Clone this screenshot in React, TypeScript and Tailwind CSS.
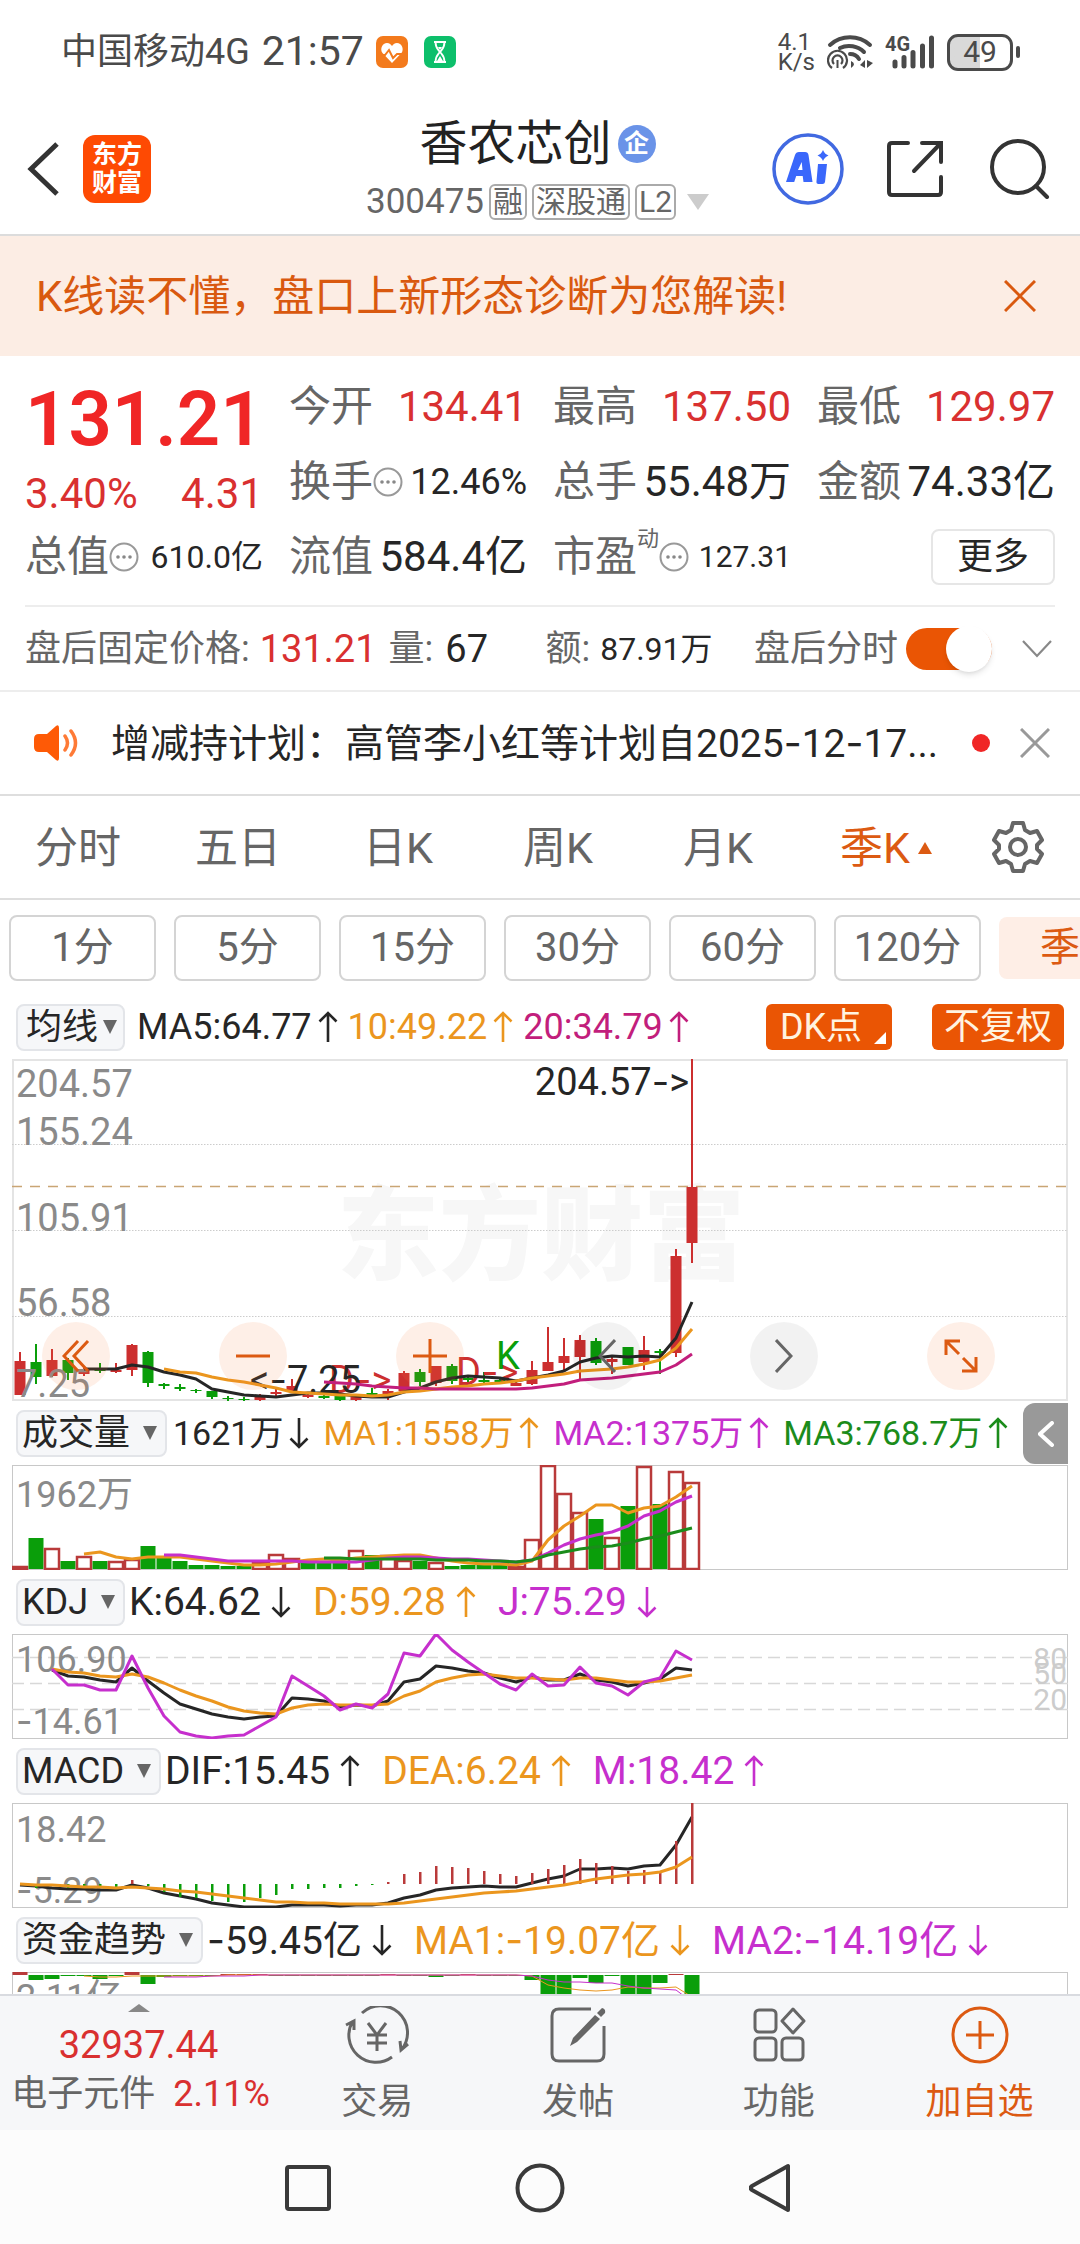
import React from "react";

const RED = "#cc2f2f";
const GREEN = "#0a9e0a";
const BLACK = "#262626";
const ORANGE = "#eb961e";
const PURPLE = "#c62fcd";
const MAGENTA = "#c21e7c";
const DARK_GREEN = "#1b8c1b";

type Candle = [up: number, high: number, top: number, bottom: number, low: number];

const candles: Candle[] = [
  [1, 293, 302, 336, 336], [0, 285, 303, 318, 325], [1, 290, 301, 317, 318], [0, 299, 301, 314, 321],
  [1, 309, 311, 315, 317], [0, 304, 310, 312, 314], [1, 304, 311, 313, 314], [1, 285, 286, 311, 317],
  [0, 292, 293, 324, 328], [0, 324, 325, 327, 330], [0, 325, 328, 330, 332], [0, 330, 331, 332, 334],
  [0, 332, 332, 338, 340], [0, 337, 339, 340, 342], [0, 338, 340, 341, 343], [1, 335, 336, 341, 342],
  [1, 329, 333, 335, 339], [1, 320, 327, 333, 334], [1, 334, 336, 338, 339], [0, 334, 337, 339, 340],
  [0, 336, 337, 341, 343], [1, 337, 338, 341, 342], [0, 329, 334, 336, 339], [1, 330, 332, 335, 341],
  [1, 312, 314, 332, 333], [0, 310, 313, 323, 327], [1, 307, 307, 324, 327], [0, 305, 307, 322, 325],
  [0, 317, 319, 321, 324], [0, 313, 321, 323, 324], [0, 319, 321, 323, 325], [1, 323, 324, 327, 327],
  [1, 302, 311, 325, 326], [1, 268, 303, 312, 312], [1, 279, 297, 304, 312], [1, 276, 281, 298, 321],
  [0, 279, 282, 304, 306], [1, 298, 300, 303, 315], [0, 288, 288, 306, 306], [1, 277, 291, 303, 311],
  [0, 290, 292, 294, 315], [1, 190, 197, 294, 298], [1, 0, 128, 184, 204],
];
const ma5 = [310, 310, 310, 306, 308, 313, 316, 320, 330, 333, 336, 337, 338, 336, 334, 334, 335, 337, 338, 338, 333, 329, 323, 319, 317, 318, 319, 322, 319, 316, 312, 303, 299, 297, 298, 297, 298, 279, 243];
const ma10 = [310, 313, 314, 318, 321, 323, 326, 329, 333, 334, 335, 336, 336, 337, 336, 333, 332, 330, 328, 327, 325, 324, 322, 319, 317, 315, 312, 311, 310, 308, 305, 301, 289, 270];
const ma20 = [323, 324, 325, 327, 328, 329, 329, 330, 330, 330, 330, 330, 330, 329, 327, 325, 321, 320, 319, 317, 315, 313, 306, 295];

const volumes: [number, number][] = [
  [1, 101], [0, 73], [1, 83], [0, 96], [1, 91], [0, 96], [1, 96], [1, 94], [0, 81], [0, 92], [0, 96],
  [0, 100], [0, 100], [0, 101], [0, 101], [1, 97], [1, 89], [1, 93], [0, 97], [0, 97], [0, 98], [1, 85],
  [0, 90], [1, 90], [1, 95], [0, 96], [1, 97], [0, 101], [0, 100], [0, 100], [0, 100], [1, 101], [1, 74],
  [1, 0], [1, 28], [1, 47], [0, 54], [1, 72], [0, 41], [1, 1], [0, 39], [1, 6], [1, 17],
];
const vma1 = [89, 87, 92, 94, 92, 92, 92, 94, 96, 98, 100, 100, 99, 97, 95, 94, 95, 93, 92, 91, 90, 90, 93, 96, 98, 99, 99, 100, 96, 75, 61, 51, 40, 40, 48, 43, 41, 32, 21];
const vma2 = [90, 90, 92, 94, 96, 96, 96, 96, 96, 97, 97, 97, 97, 95, 93, 92, 92, 93, 94, 94, 95, 96, 97, 95, 88, 80, 74, 70, 67, 61, 51, 46, 37, 31];
const vma3 = [93, 93, 94, 94, 94, 94, 94, 95, 95, 95, 96, 96, 97, 95, 90, 87, 84, 82, 81, 78, 74, 71, 67, 63];

const kdjJ = [35, 51, 51, 56, 56, 22, 54, 82, 98, 102, 104, 102, 101, 92, 83, 42, 52, 62, 76, 70, 74, 60, 19, 22, 0, 16, 28, 39, 50, 56, 40, 52, 51, 33, 49, 52, 61, 48, 44, 17, 26];
const kdjK = [36, 42, 43, 46, 48, 34, 47, 59, 70, 75, 80, 83, 85, 83, 82, 64, 65, 67, 73, 71, 72, 67, 48, 45, 32, 34, 37, 39, 44, 48, 43, 46, 46, 40, 46, 48, 52, 49, 45, 34, 36];
const kdjD = [35, 38, 39, 42, 43, 40, 43, 49, 56, 62, 67, 73, 77, 79, 80, 74, 71, 70, 71, 71, 71, 70, 62, 57, 48, 44, 41, 40, 42, 44, 44, 45, 46, 44, 44, 46, 48, 48, 47, 44, 41];

const macdBars = [81, 85, 83, 85, 83, 84, 85, 77, 83, 89, 94, 95, 98, 99, 99, 95, 92, 86, 86, 85, 85, 83, 82, 79, 71, 69, 63, 64, 65, 68, 71, 73, 70, 66, 62, 56, 60, 63, 68, 67, 68, 38, 0];
const dif = [82, 83, 85, 86, 86, 87, 87, 82, 85, 90, 93, 96, 100, 102, 104, 104, 104, 102, 102, 102, 103, 102, 102, 100, 95, 92, 87, 85, 84, 83, 84, 84, 80, 76, 73, 66, 66, 65, 66, 63, 62, 42, 14];
const dea = [81, 82, 82, 83, 84, 84, 85, 84, 85, 86, 88, 89, 91, 93, 95, 97, 99, 99, 100, 100, 101, 101, 101, 101, 100, 98, 96, 94, 92, 90, 89, 88, 86, 84, 82, 79, 76, 74, 72, 71, 69, 64, 54];

const funds = [-3, 5, 4, 1, 0, 4, 0, -3, 9, 2, 1, 1, 0, -1, -1, -1, 0, 0, 1, 0, 0, 1, 0, -1, 0, 0, 2, 0, -1, 0, 0, 0, 5, 20, 20, 3, 8, 1, 20, 20, 8, -1, 20];
const fma1 = [4, 5, 5, 4, 4, 4, 4, 4, 4, 3, 3, 3, 3, 3, 3, 3, 3, 3, 3, 3, 3, 3, 3, 3, 3, 3, 3, 3, 4, 13, 16, 18, 19, 18, 15, 16, 16, 15, 25];
const fma2 = [5, 5, 5, 4, 4, 4, 3, 3, 3, 3, 3, 3, 3, 3, 3, 3, 3, 3, 3, 3, 3, 3, 3, 4, 8, 10, 10, 11, 11, 14, 16, 17, 18, 30];

const cx = (i: number) => 8 + i * 16;

function Line({ data, start, color, width = 3 }: { data: number[]; start: number; color: string; width?: number }) {
  return (
    <polyline
      points={data.map((v, k) => `${cx(k + start)},${v}`).join(" ")}
      fill="none"
      stroke={color}
      strokeWidth={width}
      strokeLinejoin="round"
    />
  );
}

/* Hyphens use Inter, whose dash is as wide as a figure. */
function Dashed({ text }: { text: string }) {
  return (
    <span>
      {text.split(/(-)/).map((part, i) => (part === "-" ? <span key={i} className="font-['Inter']">-</span> : part))}
    </span>
  );
}

function Dash() {
  return <tspan className="font-['Inter']">-</tspan>;
}

function Arrow({ down }: { down?: boolean }) {
  return (
    <svg viewBox="0 0 20 32" className="h-8 w-5 shrink-0" fill="none" stroke="currentColor" strokeWidth="2.6" aria-hidden="true">
      <path d={down ? "M10 1V30M1.5 21.5 10 30l8.5-8.5" : "M10 31V2M1.5 10.500 10 2l8.500 8.500"} />
    </svg>
  );
}

function Picker({ name, label, tight }: { name: string; label: string; tight?: boolean }) {
  return (
    <span className="relative inline-flex shrink-0">
      <select
        aria-label={label}
        className={`h-[47px] appearance-none rounded-lg border-2 border-[#e3e5e9] bg-[#f6f7f9] text-[36px] leading-none text-[#262626] ${tight ? "pr-6 pl-2" : "pr-[34px] pl-1"}`}
      >
        <option>{name}</option>
      </select>
      <svg viewBox="0 0 14 14" className={`pointer-events-none absolute top-4 h-3.5 w-3.5 ${tight ? "right-2" : "right-2.5"}`} aria-hidden="true">
        <path d="M0 0h14L7 14z" fill="#666" />
      </svg>
    </span>
  );
}

type Item = { text: string; down?: boolean; color: string };

function Indicator({ name, items, small, children }: { name: string; items: Item[]; small?: boolean; children?: React.ReactNode }) {
  return (
    <div className="relative flex h-16 items-center pl-4 whitespace-nowrap">
      <Picker name={name} label="指标" />
      <div className={small ? "flex gap-3.5 pl-1.5 text-[34px]" : "flex gap-[22px] pl-1 text-[39px]"}>
        {items.map((it) => (
          <span key={it.text} className={`flex items-center leading-none ${small ? "gap-1.5" : "gap-2.5"} ${it.color}`}>
            <Dashed text={it.text} />
            <Arrow down={it.down} />
          </span>
        ))}
      </div>
      {children}
    </div>
  );
}

function More() {
  return (
    <svg viewBox="0 0 30 30" className="h-[30px] w-[30px] shrink-0" aria-hidden="true">
      <circle cx="15" cy="15" r="13.500" fill="none" stroke="#999" strokeWidth="2" />
      <g fill="#888"><circle cx="9" cy="15" r="1.800" /><circle cx="15" cy="15" r="1.800" /><circle cx="21" cy="15" r="1.800" /></g>
    </svg>
  );
}

function Cell({ label, value, size, more, sup }: { label: string; value: string; size: string; more?: boolean; sup?: string }) {
  return (
    <div className="flex items-center justify-between whitespace-nowrap">
      <span className="flex items-center text-[#666]">
        {label}
        {sup && <sup className="top-[-18px] text-[22px] leading-none">{sup}</sup>}
        {more && <More />}
      </span>
      <span className={size}>{value}</span>
    </div>
  );
}

function StatusBar() {
  return (
    <div className="flex h-[104px] items-center justify-between pr-[60px] pl-[61px] text-[#4a4a4a]">
      <div className="flex items-center">
        <span className="text-[36px]">中国移动4G</span>
        <span className="ml-3 text-[41px]">21:57</span>
        <svg viewBox="0 0 32 32" className="ml-3 h-8 w-8" aria-hidden="true">
          <rect width="32" height="32" rx="7" fill="#f37a1c" />
          <path d="M16 27 6.500 17c-3-4 0-10 4.500-10 2.500 0 4 1.500 5 3 1-1.500 2.500-3 5-3 4.500 0 7.500 6 4.500 10z" fill="#fff" />
          <path d="M0 19h9l4-5 4 8 4-4h11" fill="none" stroke="#f37a1c" strokeWidth="2" />
        </svg>
        <svg viewBox="0 0 32 32" className="ml-4 h-8 w-8" aria-hidden="true">
          <rect width="32" height="32" rx="7" fill="#0dbf6b" />
          <path d="M10 6h12M10 26h12M11.500 6c0 6 2 7 4.500 10 2.500-3 4.500-4 4.500-10M11.500 26c0-6 2-7 4.500-10 2.500 3 4.500 4 4.500 10" fill="none" stroke="#fff" strokeWidth="1.800" />
          <path d="m13 25 3-5 3 5zM14 11h4l-2 3z" fill="#fff" />
        </svg>
      </div>
      <div className="flex items-center">
        <div className="flex flex-col text-[24px] leading-[20px]"><span>4.1</span><span>K/s</span></div>
        <svg viewBox="0 0 46 36" className="ml-3 h-9 w-[46px]" fill="none" stroke="#4a4a4a" aria-hidden="true">
          <g strokeWidth="4" strokeLinecap="round">
            <path d="M3 11a30 30 0 0 1 40 0" />
            <path d="M13 14c8-4 18-2 24 4" />
            <path d="M23 20q6 0 9 5" />
          </g>
          <g strokeWidth="2.200">
            <path d="M5 34a9.500 9.500 0 1 1 11 0" />
            <path d="M7 30a5 5 0 1 1 7 0" />
          </g>
          <path d="M9.500 34v-8h2v8zM24 27q6 3 0 7zM38 26v8l-5-3zM40 26l6 3-6 5z" fill="#4a4a4a" stroke="none" />
        </svg>
        <svg viewBox="0 0 50 36" className="ml-3 h-9 w-[50px]" aria-hidden="true">
          <text x="0" y="17" fontSize="20" fontWeight="700" fill="#4a4a4a">4G</text>
          <path d="M10 28v4M19 23.500v8.500M28 18.500v13.500M37.500 12v20M46.500 4v28" stroke="#4a4a4a" strokeWidth="5" strokeLinecap="round" />
        </svg>
        <div className="ml-3 flex h-[37px] w-[66px] items-center justify-center rounded-[11px] border-[3px] border-[#4a4a4a] bg-linear-to-r from-[#d9d9d9] from-50% to-white to-50% text-[30px] leading-none">49</div>
        <div className="ml-[3px] h-3 w-1 rounded-sm bg-[#4a4a4a]" />
      </div>
    </div>
  );
}

function Header() {
  return (
    <header className="grid h-[132px] grid-cols-[1fr_auto_1fr] items-center border-b-2 border-[#dcdcdc] pr-[30px] pl-[25px]">
      <div className="flex items-center gap-6">
        <button aria-label="返回">
          <svg viewBox="0 0 34 54" className="h-[54px] w-[34px]" fill="none" stroke="#333" strokeWidth="5"><path d="M32 2 6 27l26 25" /></svg>
        </button>
        <div className="flex h-[68px] w-[68px] flex-col items-center justify-center rounded-xl bg-[#fe4a03] text-[25px] leading-[28px] font-bold text-white"><span>东方</span><span>财富</span></div>
      </div>
      <div className="flex flex-col items-center gap-2.5">
        <h1 className="flex items-center gap-1.5 text-[48px] leading-[56px] text-[#222]">
          香农芯创
          <span className="flex h-[38px] w-[38px] items-center justify-center rounded-full bg-[#6a93e8] text-[25px] font-bold text-white">企</span>
        </h1>
        <div className="flex items-center gap-[5px] text-[35px] leading-10 text-[#666]">
          <span>300475</span>
          {["融", "深股通", "L2"].map((t) => (
            <span key={t} className="flex h-9 items-center rounded-md border-2 border-[#aaa] px-0.5 text-[30px]">{t}</span>
          ))}
          <svg viewBox="0 0 22 16" className="ml-1.5 h-4 w-[22px]" aria-hidden="true"><path d="M0 0h22L11 16z" fill="#ccc" /></svg>
        </div>
      </div>
      <div className="flex items-center justify-end">
        <button aria-label="Ai">
          <svg viewBox="0 0 72 72" className="h-[72px] w-[72px]">
            <circle cx="36" cy="36" r="34" fill="none" stroke="#4169e1" strokeWidth="3.500" />
            <path d="M14 49 23 22q1-3 4-3h6q3 0 3.500 3l4 27h-9l-.8-6h-6.500l-2 6zM26 37h4.500l-.8-8zM46 31h9l-2 18q-.3 2-2.500 2h-4q-2.500 0-2-3zM51 17q1.500 4 5.500 5.500-4 1.500-5.500 5.500-1.500-4-5.500-5.500 4-1.500 5.500-5.500z" fill="#3a67fb" fillRule="evenodd" />
          </svg>
        </button>
        <button aria-label="分享" className="ml-[42px]">
          <svg viewBox="0 0 58 58" className="h-[58px] w-[58px]" fill="none" stroke="#333" strokeWidth="4" strokeLinecap="round">
            <path d="M22 3H6Q3 3 3 6v46q0 3 3 3h46q3 0 3-3V37M55 22V3H36M55 3 28 31" />
          </svg>
        </button>
        <button aria-label="搜索" className="ml-[46px]">
          <svg viewBox="0 0 60 60" className="h-[60px] w-[60px]" fill="none" stroke="#333" strokeWidth="4" strokeLinecap="round">
            <circle cx="28" cy="28" r="26" /><path d="m46 47 11 11" />
          </svg>
        </button>
      </div>
    </header>
  );
}

function Quote() {
  return (
    <section className="px-[25px] pt-[13px] text-[42px] leading-none">
      <div className="grid grid-cols-4 grid-rows-[75px_75px_75px] gap-x-[26px] pb-[11px] text-[#262626]">
        <div className="row-span-2 flex flex-col justify-between pt-3">
          <div className="text-center text-[76px] leading-[76px] font-semibold text-[#f02626]">131.21</div>
          <div className="flex h-[50px] items-center justify-between text-[#d93030]"><span>3.40%</span><span>4.31</span></div>
        </div>
        <Cell label="今开" value="134.41" size="text-[42px] text-[#d93030]" />
        <Cell label="最高" value="137.50" size="text-[42px] text-[#d93030]" />
        <Cell label="最低" value="129.97" size="text-[42px] text-[#d93030]" />
        <Cell label="换手" value="12.46%" size="text-[36px]" more />
        <Cell label="总手" value="55.48万" size="text-[42px]" />
        <Cell label="金额" value="74.33亿" size="text-[42px]" />
        <Cell label="总值" value="610.0亿" size="text-[32px]" more />
        <Cell label="流值" value="584.4亿" size="text-[42px]" />
        <Cell label="市盈" value="127.31" size="text-[30px]" more sup="动" />
        <div className="flex items-center justify-end">
          <button className="h-14 w-[124px] rounded-lg border-2 border-[#e6e6e6] text-[36px]">更多</button>
        </div>
      </div>
      <div className="flex h-[85px] items-center border-t-2 border-[#ededed] text-[36px] whitespace-nowrap text-[#666]">
        <span>盘后固定价格:</span>
        <span className="ml-2.5 text-[38px] text-[#d93030]">131.21</span>
        <span className="ml-3">量:</span>
        <span className="ml-3 text-[38px] text-[#262626]">67</span>
        <span className="ml-auto pl-4">额:</span>
        <span className="ml-2.5 text-[32px] text-[#262626]">87.91万</span>
        <label htmlFor="after-hours" className="ml-auto">盘后分时</label>
        <span className="relative ml-2 h-[42px] w-[86px]">
          <input id="after-hours" type="checkbox" defaultChecked className="h-full w-full appearance-none rounded-full bg-[#ddd] checked:bg-[#ea5504]" />
          <span className="pointer-events-none absolute -top-0.5 right-0 h-[46px] w-[46px] rounded-full bg-white shadow-md" />
        </span>
        <button aria-label="展开" className="mr-[3px] ml-[30px]">
          <svg viewBox="0 0 30 18" className="h-[18px] w-[30px]" fill="none" stroke="#888" strokeWidth="2.200"><path d="m1 1 14 15L29 1" /></svg>
        </button>
      </div>
    </section>
  );
}

function Notice() {
  return (
    <section className="flex h-[106px] items-center border-y-2 border-[#dedede] border-t-[#ededed] pr-[30px] pl-[34px]">
      <svg viewBox="0 0 44 36" className="h-9 w-11 shrink-0" aria-hidden="true">
        <path d="M5 9h8L22 1q3-2 3 2v30q0 4-3 2l-9-8H5q-5 0-5-5v-8q0-5 5-5z" fill="#fe5a06" />
        <path d="M31 11q5 7 0 14M37 6q9 12 0 24" fill="none" stroke="#fe7a36" strokeWidth="3.500" strokeLinecap="round" />
      </svg>
      <p className="ml-[33px] min-w-0 flex-1 text-[39px] leading-[56px] whitespace-nowrap text-[#262626]">
        <Dashed text="增减持计划：高管李小红等计划自2025-12-17..." />
      </p>
      <span className="ml-4 h-[18px] w-[18px] rounded-full bg-[#f02626]" />
      <button aria-label="关闭" className="ml-[30px]">
        <svg viewBox="0 0 30 30" className="h-[30px] w-[30px]" stroke="#999" strokeWidth="3"><path d="m1 1 28 28M29 1 1 29" /></svg>
      </button>
    </section>
  );
}

function Tabs() {
  return (
    <nav className="grid h-[104px] grid-cols-[repeat(6,4fr)_3fr] border-b-2 border-[#dedede] text-[43px] text-[#666]">
      {["分时", "五日", "日K", "周K", "月K"].map((t) => (
        <button key={t} className="pt-0.5 pr-1">{t}</button>
      ))}
      <button className="flex items-center justify-center gap-2 pt-0.5 pl-3 text-[#dc5a12]">
        季K
        <svg viewBox="0 0 14 12" className="h-3 w-3.5" aria-hidden="true"><path d="M7 0l7 12H0z" fill="#dc5a12" /></svg>
      </button>
      <button aria-label="设置" className="flex items-center justify-center pr-1">
        <svg viewBox="0 0 52 52" className="h-[52px] w-[52px]" fill="none" stroke="#666" strokeWidth="4" strokeLinejoin="round">
          <path d="M21 2h10l2 7 5 3 7-2 5 9-5 5v4l5 5-5 9-7-2-5 3-2 7H21l-2-7-5-3-7 2-5-9 5-5v-4l-5-5 5-9 7 2 5-3z" />
          <circle cx="26" cy="26" r="8" />
        </svg>
      </button>
    </nav>
  );
}

function PriceChart() {
  const zoomBtn = "flex h-[68px] w-[68px] items-center justify-center rounded-full bg-[#f57b3c]/12 text-[#dc5a12]";
  const navBtn = "flex h-[68px] w-[68px] items-center justify-center rounded-full bg-black/5 text-[#666]";
  return (
    <div className="relative mx-3">
      <svg viewBox="0 0 1056 342" className="block w-full" role="img" aria-label="季K线图">
        <text x="325" y="213" fontSize="102" fontWeight="900" fill="#f7f7f7">东方财富</text>
        <rect x="1" y="1" width="1054" height="340" fill="none" stroke="#e4e4e4" strokeWidth="2" />
        <path d="M0 85.500H1056M0 171.500H1056M0 257.500H1056" stroke="#ccc" strokeDasharray="1.500 1.500" />
        <path d="M0 127.500H1056" stroke="#c9a574" strokeWidth="1.500" strokeDasharray="10 8" />
        {candles.map(([up, h, t, b, l], i) => (
          <g key={i} fill={up ? RED : GREEN}>
            <rect x={cx(i) - 1} y={h} width="2" height={l - h} />
            <rect x={cx(i) - 5.5} y={t} width="11" height={b - t} />
          </g>
        ))}
        <g fontSize="38" fill="#8a8a8a">
          <text x="4" y="38">204.57</text>
          <text x="4" y="86">155.24</text>
          <text x="4" y="172">105.91</text>
          <text x="4" y="257">56.58</text>
          <text x="4" y="338">7.25</text>
        </g>
        <text x="677" y="36" textAnchor="end" fontSize="38" fill={BLACK}>204.57<Dash />&gt;</text>
        <g fontSize="38">
          <text x="317" y="334" fill={RED}>D<Dash />&gt;</text>
          <text x="444" y="326" fill={RED}>D<Dash />&gt;</text>
          <text x="484" y="310" fill={GREEN}>K</text>
          <text x="349" y="334" textAnchor="end" fill={BLACK}>&lt;<Dash />7.25</text>
        </g>
        <Line data={ma5} start={4} color={BLACK} />
        <Line data={ma10} start={9} color={ORANGE} />
        <Line data={ma20} start={19} color={MAGENTA} />
      </svg>
      <div className="absolute inset-x-0 bottom-[11px] flex justify-between pr-[73px] pl-[30px]">
        <button aria-label="最早" className={zoomBtn}>
          <svg viewBox="0 0 28 32" className="h-8 w-7" fill="none" stroke="currentColor" strokeWidth="3"><path d="M16 1 2 16l14 15M26 1 12 16l14 15" /></svg>
        </button>
        <button aria-label="缩小" className={zoomBtn}>
          <svg viewBox="0 0 34 34" className="h-[34px] w-[34px]" stroke="currentColor" strokeWidth="3"><path d="M0 17h34" /></svg>
        </button>
        <button aria-label="放大" className={zoomBtn}>
          <svg viewBox="0 0 34 34" className="h-[34px] w-[34px]" stroke="currentColor" strokeWidth="3"><path d="M0 17h34M17 0v34" /></svg>
        </button>
        <button aria-label="向左" className={navBtn}>
          <svg viewBox="0 0 18 34" className="h-[34px] w-[18px]" fill="none" stroke="currentColor" strokeWidth="3"><path d="M17 1 2 17l15 16" /></svg>
        </button>
        <button aria-label="向右" className={navBtn}>
          <svg viewBox="0 0 18 34" className="h-[34px] w-[18px]" fill="none" stroke="currentColor" strokeWidth="3"><path d="m1 1 15 16L1 33" /></svg>
        </button>
        <button aria-label="全屏" className={zoomBtn}>
          <svg viewBox="0 0 34 34" className="h-[34px] w-[34px]" fill="none" stroke="currentColor" strokeWidth="3"><path d="M2 16V2h14M2 2l13 13M32 18v14H18M32 32 19 19" /></svg>
        </button>
      </div>
    </div>
  );
}

function SubChart({ label, children }: { label: string; children: React.ReactNode }) {
  return (
    <div className="mx-3">
      <svg viewBox="0 0 1056 105" className="block w-full" role="img" aria-label={label}>
        <rect x="0.5" y="0.5" width="1055" height="104" fill="none" stroke="#c8c8c8" />
        {children}
      </svg>
    </div>
  );
}

function BottomNav() {
  const ico = "h-[58px] w-[64px]";
  return (
    <nav className="flex h-[136px] border-t-2 border-[#d9dbe0] bg-[#f6f7f9] text-[36px] leading-none text-[#666]">
      <button className="flex w-[277px] flex-col items-center pt-2">
        <svg viewBox="0 0 22 8" className="h-2 w-[22px]" aria-hidden="true"><path d="M11 0l11 8H0z" fill="#888" /></svg>
        <span className="mt-3.5 text-[38px] text-[#d93030]">32937.44</span>
        <span className="mt-3 flex items-center gap-[18px] pl-1">电子元件<span className="text-[#d93030]">2.11%</span></span>
      </button>
      <button className="flex flex-1 flex-col items-center gap-5 pt-2.5">
        <svg viewBox="0 0 64 58" className={ico} fill="none" stroke="currentColor" strokeWidth="3">
          <path d="M17 7a27 27 0 0 1 40 36M47 51A27 27 0 0 1 8 15M1 19l8-4v9M63 38l-7 6-1-9" />
          <path d="m23 17 9 12 9-12M32 29v16M22 29h20M22 37h20" />
        </svg>
        交易
      </button>
      <button className="flex flex-1 flex-col items-center gap-5 pt-2.5">
        <svg viewBox="0 0 64 58" className={ico} fill="none" stroke="currentColor" strokeWidth="3">
          <path d="M45 3H13q-7 0-7 7v38q0 7 7 7h38q7 0 7-7V20" />
          <path d="m49 9 5 4-23 23-7 4 3-8zM51 7l5-5q4 1 3 5l-4 4z" fill="currentColor" stroke="none" />
        </svg>
        发帖
      </button>
      <button className="flex flex-1 flex-col items-center gap-5 pt-2.5">
        <svg viewBox="0 0 64 58" className={ico} fill="none" stroke="currentColor" strokeWidth="3">
          <rect x="8" y="4" width="21" height="22" rx="4" /><rect x="8" y="32" width="21" height="22" rx="4" /><rect x="35" y="32" width="21" height="22" rx="4" />
          <path d="M46 3 57 15 46 27 35 15z" strokeLinejoin="round" />
        </svg>
        功能
      </button>
      <button className="flex flex-1 flex-col items-center gap-5 pt-2.5 text-[#dc5a12]">
        <svg viewBox="0 0 64 58" className={ico} fill="none" stroke="currentColor" strokeWidth="3">
          <circle cx="32" cy="29" r="27" /><path d="M18 29h28M32 15v28" />
        </svg>
        加自选
      </button>
    </nav>
  );
}

function SystemNav() {
  return (
    <div className="flex h-[115px] items-center justify-center gap-[184px] bg-[#fcfcfc]">
      <button aria-label="最近任务"><svg viewBox="0 0 46 48" className="h-12 w-[46px]"><rect x="2" y="3" width="42" height="42" rx="2" fill="none" stroke="#3a3a3a" strokeWidth="4" /></svg></button>
      <button aria-label="主屏幕"><svg viewBox="0 0 50 50" className="h-[50px] w-[50px]"><circle cx="25" cy="25" r="22.500" fill="none" stroke="#3a3a3a" strokeWidth="4" /></svg></button>
      <button aria-label="返回上一级"><svg viewBox="0 0 46 50" className="h-[50px] w-[46px]"><path d="M39 3v44L3 27q-3-2 0-4z" fill="none" stroke="#3a3a3a" strokeWidth="4" strokeLinejoin="round" /></svg></button>
    </div>
  );
}

const C = { black: "text-[#262626]", orange: "text-[#eb961e]", purple: "text-[#c62fcd]", green: "text-[#1b8c1b]" };

export default function App() {
  return (
    <main className="w-full overflow-hidden bg-white font-['Roboto','Noto_Sans_CJK_SC',sans-serif]">
      <StatusBar />
      <Header />
      <div className="flex h-[120px] items-center justify-between bg-[#fcede4] pr-[44px] pl-[36px] text-[42px] text-[#d9590f]">
        <p>K线读不懂，盘口上新形态诊断为您解读!</p>
        <button aria-label="关闭提示">
          <svg viewBox="0 0 32 32" className="h-8 w-8" stroke="currentColor" strokeWidth="3"><path d="m1 1 30 30M31 1 1 31" /></svg>
        </button>
      </div>
      <Quote />
      <Notice />
      <Tabs />
      <div className="flex gap-[18px] overflow-hidden pt-[15px] pl-[9px] text-[40px] leading-none text-[#666]">
        {["1分", "5分", "15分", "30分", "60分", "120分"].map((t) => (
          <button key={t} className="h-[66px] w-[147px] shrink-0 rounded-lg border-2 border-[#d4d4d4]">{t}</button>
        ))}
        <button className="h-[62px] w-[147px] shrink-0 self-center rounded-lg bg-[#feeee6] text-[#dc5a12]">季K</button>
      </div>
      <div className="flex h-[78px] items-center pt-3.5 pr-4 pl-4 text-[36px] leading-none whitespace-nowrap">
        <Picker name="均线" label="主图指标" tight />
        <div className="flex gap-2.5 pl-3">
          <span className="flex items-center gap-1.5 text-[#262626]">MA5:64.77<Arrow /></span>
          <span className="flex items-center gap-1.5 text-[#eb961e]">10:49.22<Arrow /></span>
          <span className="flex items-center gap-1.5 text-[#c21e7c]">20:34.79<Arrow /></span>
        </div>
        <button className="relative ml-auto h-[46px] w-[126px] rounded-md bg-[#ea5504] pr-4 text-[36px] text-[#fff3e0]">
          DK点
          <svg viewBox="0 0 12 12" className="absolute right-1.5 bottom-1.5 h-3 w-3" aria-hidden="true"><path d="M12 0v12H0z" fill="#fff" /></svg>
        </button>
        <button className="ml-10 h-[46px] w-[132px] rounded-md bg-[#ea5504] text-[36px] text-[#fff3e0]">不复权</button>
      </div>
      <PriceChart />

      <Indicator
        name="成交量"
        small
        items={[
          { text: "1621万", down: true, color: C.black },
          { text: "MA1:1558万", color: C.orange },
          { text: "MA2:1375万", color: C.purple },
          { text: "MA3:768.7万", color: C.green },
        ]}
      >
        <button aria-label="展开侧栏" className="absolute top-0.5 right-3 flex h-[61px] w-[45px] items-center justify-center rounded-l-xl bg-[#999]">
          <svg viewBox="0 0 16 26" className="h-[26px] w-4" fill="none" stroke="#fff" strokeWidth="4" strokeLinecap="round"><path d="M14 2 2 13l12 11" /></svg>
        </button>
      </Indicator>
      <SubChart label="成交量">
        {volumes.map(([up, t], i) =>
          up ? (
            <rect key={i} x={cx(i) - 7} y={t + 1} width="14" height={103 - t} fill="#fff" stroke="#b93a3a" strokeWidth="2.500" />
          ) : (
            <rect key={i} x={cx(i) - 7.5} y={t} width="15" height={104 - t} fill={GREEN} />
          ),
        )}
        <text x="4" y="42" fontSize="36" fill="#8a8a8a">1962万</text>
        <Line data={vma1} start={4} color={ORANGE} />
        <Line data={vma2} start={9} color={PURPLE} />
        <Line data={vma3} start={19} color={DARK_GREEN} />
      </SubChart>

      <Indicator
        name="KDJ"
        items={[
          { text: "K:64.62", down: true, color: C.black },
          { text: "D:59.28", color: C.orange },
          { text: "J:75.29", down: true, color: C.purple },
        ]}
      />
      <SubChart label="KDJ">
        <path d="M0 23.500H1056M0 49.500H1056M0 75.500H1056" stroke="#d8d8d8" strokeWidth="1.500" strokeDasharray="12 6" />
        <g fontSize="36" fill="#8a8a8a"><text x="4" y="38">106.90</text><text x="4" y="100"><Dash />14.61</text></g>
        <g fontSize="30" fill="#ccc" textAnchor="end"><text x="1055" y="35">80</text><text x="1055" y="50">50</text><text x="1055" y="76">20</text></g>
        <Line data={kdjK} start={2} color={BLACK} />
        <Line data={kdjD} start={2} color={ORANGE} />
        <Line data={kdjJ} start={2} color={PURPLE} />
      </SubChart>

      <Indicator
        name="MACD"
        items={[
          { text: "DIF:15.45", color: C.black },
          { text: "DEA:6.24", color: C.orange },
          { text: "M:18.42", color: C.purple },
        ]}
      />
      <SubChart label="MACD">
        <g fontSize="36" fill="#8a8a8a"><text x="4" y="39">18.42</text><text x="4" y="100"><Dash />5.29</text></g>
        <Line data={dif} start={0} color={BLACK} />
        {macdBars.map((v, i) => (
          <rect key={i} x={cx(i) - 1} y={Math.min(v, 81)} width="2.500" height={Math.abs(v - 81)} fill={v < 81 ? "#b93a3a" : GREEN} />
        ))}
        <Line data={dea} start={0} color={ORANGE} />
      </SubChart>

      <Indicator
        name="资金趋势"
        items={[
          { text: "-59.45亿", down: true, color: C.black },
          { text: "MA1:-19.07亿", down: true, color: C.orange },
          { text: "MA2:-14.19亿", down: true, color: C.purple },
        ]}
      />
      <div className="mx-3 h-[22px] overflow-hidden">
        <svg viewBox="0 0 1056 105" className="block w-full" role="img" aria-label="资金趋势">
          <rect x="0.5" y="0.5" width="1055" height="104" fill="none" stroke="#c8c8c8" />
          <text x="4" y="38" fontSize="36" fill="#8a8a8a">2.11亿</text>
          {funds.map((v, i) => (
            <rect key={i} x={cx(i) - 7.5} y={v < 0 ? 3 + v : 3} width="15" height={Math.max(Math.abs(v), 1)} fill={v < 0 ? "#b93a3a" : GREEN} />
          ))}
          <Line data={fma1} start={4} color={ORANGE} width={1} />
          <Line data={fma2} start={9} color={PURPLE} width={1} />
        </svg>
      </div>
      <BottomNav />
      <SystemNav />
    </main>
  );
}
